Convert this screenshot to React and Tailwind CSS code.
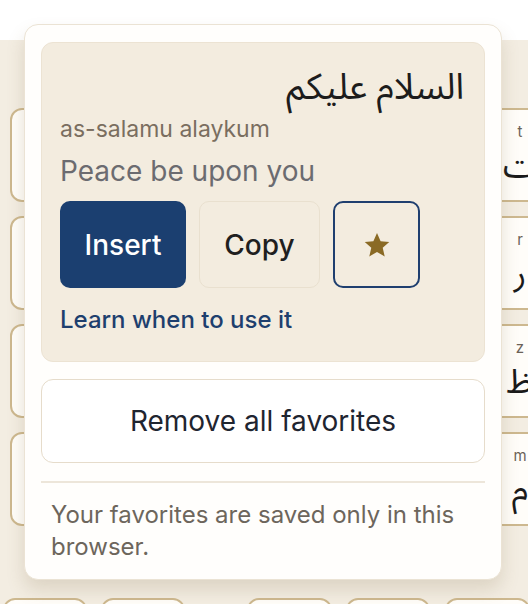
import React from "react";

const rightKeys = [
  { latin: "t", arabic: "ت" },
  { latin: "r", arabic: "ر" },
  { latin: "z", arabic: "ظ" },
  { latin: "m", arabic: "م" },
];

const Key = ({ latin, arabic }) => (
  <div className="flex h-[94px] w-[100px] shrink-0 flex-col items-center rounded-[12px] border-2 border-[#cdb88f] bg-[#fffdf9] pt-[12px]">
    {latin && (
      <>
        <span className="text-[15px] leading-5 text-[#6b6257]">{latin}</span>
        <span className="mt-[2px] text-[34px] leading-[44px] text-[#1a1a1a] font-['Noto_Sans_Arabic','DejaVu_Sans',sans-serif]">
          {arabic}
        </span>
      </>
    )}
  </div>
);

const Star = () => (
  <svg viewBox="0 0 24 24" className="h-[28px] w-[28px]" fill="#8a6a25">
    <path d="M12 1.8l3.1 6.9 7.4.7-5.6 5 1.7 7.4L12 17.9l-6.6 3.9 1.7-7.4-5.6-5 7.4-.7z" />
  </svg>
);

const App = () => {
  return (
    <div className="relative h-[604px] w-[528px] overflow-hidden bg-[#f3ede2] font-['Inter',sans-serif]">
      <div className="h-10 bg-white" />

      {/* keyboard behind the popover */}
      <div className="flex flex-col gap-[14px] pl-[10px] pt-[68px]">
        {rightKeys.map((k) => (
          <div key={k.latin} className="flex gap-[15px]">
            <Key />
            <Key />
            <Key />
            <Key />
            <Key latin={k.latin} arabic={k.arabic} />
          </div>
        ))}
      </div>
      <div className="mt-[72px] flex pl-[3px]">
        <div className="h-[60px] w-[84px] shrink-0 rounded-[12px] border-2 border-[#cdb88f] bg-[#fffdf9]" />
        <div className="ml-[14px] h-[60px] w-[84px] shrink-0 rounded-[12px] border-2 border-[#cdb88f] bg-[#fffdf9]" />
        <div className="ml-[62px] h-[60px] w-[85px] shrink-0 rounded-[12px] border-2 border-[#cdb88f] bg-[#fffdf9]" />
        <div className="ml-[14px] h-[60px] w-[84px] shrink-0 rounded-[12px] border-2 border-[#cdb88f] bg-[#fffdf9]" />
        <div className="ml-[15px] h-[60px] w-[85px] shrink-0 rounded-[12px] border-2 border-[#cdb88f] bg-[#fffdf9]" />
      </div>

      {/* favorites popover */}
      <div className="absolute left-[24px] top-[24px] w-[478px] rounded-[14px] border border-[#ebe3d4] bg-[#fffefc] px-[16px] pb-[16px] pt-[17px] shadow-[0_10px_18px_rgba(120,100,60,0.18)]">
        <div className="rounded-[12px] border border-[#ece3d3] bg-[#f3ecdf] pb-[25px] pl-[18px] pr-[20px] pt-[18px]">
          <div
            dir="rtl"
            className="text-right text-[36px] leading-[54px] text-[#1c1c1c] font-['Noto_Sans_Arabic','Noto_Sans','DejaVu_Sans',sans-serif]"
          >
            السلام عليكم
          </div>
          <div className="text-[23px] leading-[28px] text-[#7a6e5f]">
            as-salamu alaykum
          </div>
          <div className="mt-[10px] text-[28px] leading-[36px] text-[#6b6b70]">
            Peace be upon you
          </div>
          <div className="mt-[12px] flex gap-[13px]">
            <button className="h-[87px] w-[126px] rounded-[10px] bg-[#1b3f70] text-[28px] font-medium text-white">
              Insert
            </button>
            <button className="h-[87px] w-[121px] rounded-[10px] border border-[#e9e0cf] bg-[#f3ecdf] text-[28px] font-medium text-[#1f1f1f]">
              Copy
            </button>
            <button className="flex h-[87px] w-[87px] items-center justify-center rounded-[10px] border-2 border-[#1f3f6f]">
              <Star />
            </button>
          </div>
          <div className="mt-[16px] text-[24px] font-medium leading-[32px] text-[#1e3f6e]">
            Learn when to use it
          </div>
        </div>

        <button className="mt-[17px] h-[84px] w-full rounded-[12px] border border-[#e6dccb] bg-white text-[28px] text-[#1f2530]">
          Remove all favorites
        </button>

        <div className="mt-[18px] h-[2px] bg-[#ede6da]" />

        <p className="px-[10px] pt-[16px] text-[24px] leading-[32px] text-[#6d665c]">
          Your favorites are saved only in this browser.
        </p>
      </div>
    </div>
  );
};

export default App;
